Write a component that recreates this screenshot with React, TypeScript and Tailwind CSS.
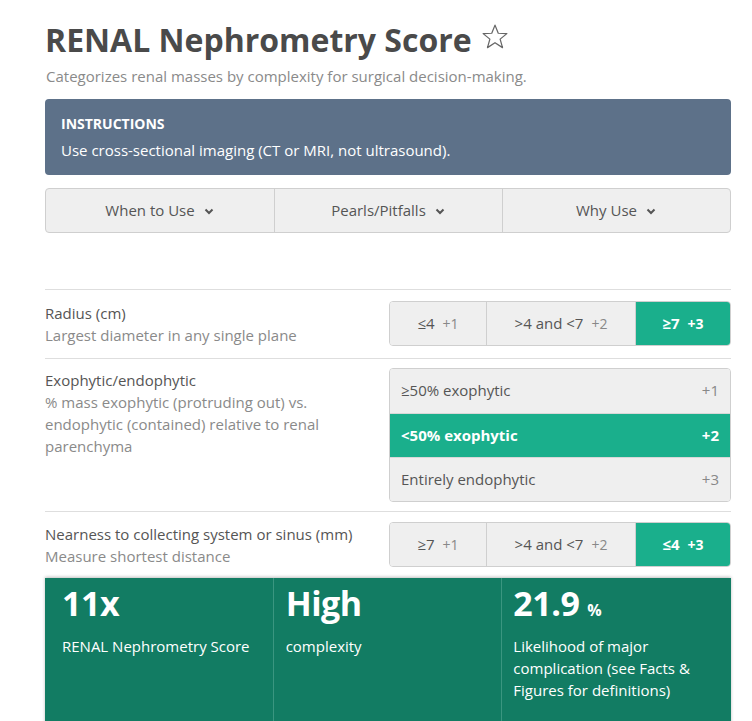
import { useState } from 'react';

type Opt = { label: string; pts: number };

const radiusOpts: Opt[] = [
  { label: '≤4', pts: 1 },
  { label: '>4 and <7', pts: 2 },
  { label: '≥7', pts: 3 },
];

const exoOpts: Opt[] = [
  { label: '≥50% exophytic', pts: 1 },
  { label: '<50% exophytic', pts: 2 },
  { label: 'Entirely endophytic', pts: 3 },
];

const nearOpts: Opt[] = [
  { label: '≥7', pts: 1 },
  { label: '>4 and <7', pts: 2 },
  { label: '≤4', pts: 3 },
];

const Chevron = () => (
  <svg width="12" height="12" viewBox="0 0 12 12" className="ml-2 mt-[2px]">
    <path d="M2.5 4.5 L6 8 L9.5 4.5" fill="none" stroke="#555" strokeWidth="2" />
  </svg>
);

const Star = () => (
  <svg width="30" height="30" viewBox="0 0 24 24" className="ml-[8px] mb-[12px]">
    <path
      d="M12 2.5 L14.6 9 L21.5 9.3 L16.1 13.7 L18 20.5 L12 16.6 L6 20.5 L7.9 13.7 L2.5 9.3 L9.4 9 Z"
      fill="none"
      stroke="#666"
      strokeWidth="1"
      strokeLinejoin="round"
    />
  </svg>
);

const HSegment = ({ opts, value, onPick, widths }: { opts: Opt[]; value: number; onPick: (i: number) => void; widths: string[] }) => (
  <div className="flex h-[45px] w-[342px] rounded border border-[#cfcfcf] overflow-hidden">
    {opts.map((o, i) => {
      const on = i === value;
      return (
        <button
          key={o.label}
          onClick={() => onPick(i)}
          className={`${widths[i]} flex items-center justify-center text-[15px] ${i > 0 ? 'border-l border-[#cfcfcf]' : ''} ${
            on ? 'bg-[#1aaf8c] text-white font-bold border-[#1aaf8c]' : 'bg-[#efefef] text-[#555]'
          }`}
        >
          <span>{o.label}</span>
          <span className={`ml-2 text-[14px] ${on ? 'text-white' : 'text-[#888]'}`}>+{o.pts}</span>
        </button>
      );
    })}
  </div>
);

const Result = ({ value, unit, label, px }: { value: string; unit?: string; label: string; px: string }) => (
  <div className={`${px} pt-[3px] pb-4`}>
    <div className="flex items-baseline h-[44px]">
      <span className="text-[34px] font-bold leading-[44px] tracking-[-0.5px]">{value}</span>
      {unit && <span className="text-[16px] font-bold ml-2">{unit}</span>}
    </div>
    <div className="text-[15px] mt-[10px] leading-[22px]">{label}</div>
  </div>
);

export default function App() {
  const [radius, setRadius] = useState(2);
  const [exo, setExo] = useState(1);
  const [near, setNear] = useState(2);

  return (
    <div className="bg-white min-h-screen font-['Open_Sans',sans-serif] text-[#444]">
      <div className="w-[686px] ml-[45px] pt-[16px]">
        <div className="flex items-end">
          <h1 className="text-[32px] font-bold text-[#4a4a4a] leading-[48px]">RENAL Nephrometry Score</h1>
          <Star />
        </div>
        <p className="text-[15px] text-[#8a8a8a] mt-[1px] ml-[1px]">
          Categorizes renal masses by complexity for surgical decision-making.
        </p>

        <div className="mt-[11px] bg-[#5d7189] rounded-sm px-4 pt-[15px] pb-[15px] text-white">
          <div className="text-[14px] font-bold leading-[20px]">INSTRUCTIONS</div>
          <div className="text-[15px] mt-[6px] leading-[20px]">Use cross-sectional imaging (CT or MRI, not ultrasound).</div>
        </div>

        <div className="mt-[13px] grid grid-cols-3 h-[45px] bg-[#efefef] border border-[#cfcfcf] rounded">
          {['When to Use', 'Pearls/Pitfalls', 'Why Use'].map((t, i) => (
            <button
              key={t}
              className={`flex items-center justify-center text-[15px] text-[#555] ${i > 0 ? 'border-l border-[#cfcfcf]' : ''}`}
            >
              {t}
              <Chevron />
            </button>
          ))}
        </div>

        <div className="mt-[56px] border-t border-[#dedede]">
          <div className="flex items-center justify-between h-[69px] border-b border-[#dedede]">
            <div>
              <div className="text-[15px] text-[#555] leading-[22px]">Radius (cm)</div>
              <div className="text-[15px] text-[#8a8a8a] leading-[22px]">Largest diameter in any single plane</div>
            </div>
            <HSegment opts={radiusOpts} value={radius} onPick={setRadius} widths={['w-[96px]', 'w-[149px]', 'flex-1']} />
          </div>

          <div className="flex justify-between pt-[9px] pb-[9px] border-b border-[#dedede]">
            <div className="pt-[1px]">
              <div className="text-[15px] text-[#555] leading-[22px]">Exophytic/endophytic</div>
              <div className="text-[15px] text-[#8a8a8a] leading-[22px] w-[300px]">
                % mass exophytic (protruding out) vs. endophytic (contained) relative to renal parenchyma
              </div>
            </div>
            <div className="w-[342px] rounded border border-[#cfcfcf] overflow-hidden">
              {exoOpts.map((o, i) => {
                const on = i === exo;
                return (
                  <button
                    key={o.label}
                    onClick={() => setExo(i)}
                    className={`w-full h-[44px] flex items-center justify-between px-[11px] text-[15px] ${i > 0 ? 'border-t border-[#d8d8d8]' : ''} ${
                      on ? 'bg-[#1aaf8c] text-white font-bold' : 'bg-[#efefef] text-[#555]'
                    }`}
                  >
                    <span>{o.label}</span>
                    <span className={on ? 'text-white' : 'text-[#888]'}>+{o.pts}</span>
                  </button>
                );
              })}
            </div>
          </div>

          <div className="flex items-center justify-between h-[66px]">
            <div>
              <div className="text-[15px] text-[#555] leading-[22px]">Nearness to collecting system or sinus (mm)</div>
              <div className="text-[15px] text-[#8a8a8a] leading-[22px]">Measure shortest distance</div>
            </div>
            <HSegment opts={nearOpts} value={near} onPick={setNear} widths={['w-[96px]', 'w-[149px]', 'flex-1']} />
          </div>
        </div>

        <div className="grid grid-cols-3 bg-[#127c63] text-white h-[160px] shadow-[0_-1px_3px_rgba(0,0,0,0.25)] divide-x divide-[#3a9680]">
          <Result value="11x" label="RENAL Nephrometry Score" px="px-[17px]" />
          <Result value="High" label="complexity" px="px-[12px]" />
          <Result value="21.9" unit="%" label="Likelihood of major complication (see Facts & Figures for definitions)" px="px-[11px]" />
        </div>
      </div>
    </div>
  );
}
